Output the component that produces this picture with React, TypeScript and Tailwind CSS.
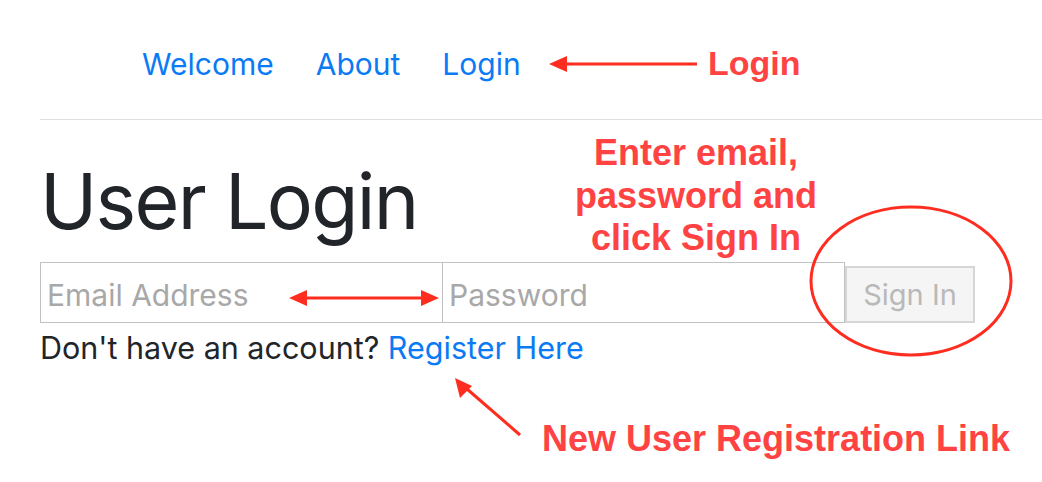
import React from "react";

const blue = "text-[#0a7bf5]";

const Annotations = () => (
  <>
    <svg
      className="pointer-events-none absolute left-0 top-0"
      width={1042}
      height={482}
      viewBox="0 0 1042 482"
    >
      {/* nav arrow */}
      <line x1={697} y1={64} x2={562} y2={64} stroke="#fe2d20" strokeWidth={3} />
      <path d="M549 64 L567 56 L567 72 Z" fill="#fe2d20" />
      {/* double arrow */}
      <line x1={300} y1={298} x2={428} y2={298} stroke="#fe2d20" strokeWidth={3} />
      <path d="M289 298 L307 290 L307 306 Z" fill="#fe2d20" />
      <path d="M439 298 L421 290 L421 306 Z" fill="#fe2d20" />
      {/* diagonal arrow */}
      <line x1={520} y1={435} x2={467} y2={389} stroke="#fe2d20" strokeWidth={3} />
      <path d="M455 378 L460 398 L472 386 Z" fill="#fe2d20" />
      {/* circle around sign in */}
      <ellipse cx={911} cy={281} rx={100} ry={74} fill="none" stroke="#fe2d20" strokeWidth={3} />
    </svg>
    <div className="absolute left-[708px] top-[42px] font-['Liberation_Sans',Arial,sans-serif] text-[34px] font-bold leading-[42px] text-[#ff4242]">
      Login
    </div>
    <div className="absolute left-[546px] top-[132px] w-[300px] text-center font-['Liberation_Sans',Arial,sans-serif] text-[36px] font-bold leading-[42.5px] text-[#ff4242]">
      Enter email,
      <br />
      password and
      <br />
      click Sign In
    </div>
    <div className="absolute left-[542px] top-[418px] whitespace-nowrap font-['Liberation_Sans',Arial,sans-serif] text-[36px] font-bold leading-[42px] text-[#ff4242]">
      New User Registration Link
    </div>
  </>
);

export default function App() {
  return (
    <div className="relative h-[482px] w-[1042px] overflow-hidden bg-white font-['Inter',sans-serif] text-[#212529]">
      <nav className="flex gap-[42px] pl-[142px] pt-[41px] text-[30px] leading-[46px]">
        <a className={blue}>Welcome</a>
        <a className={blue}>About</a>
        <a className={blue}>Login</a>
      </nav>
      <hr className="ml-[40px] mt-[32px] border-t border-[#dedede]" />
      <div className="pl-[40px]">
        <h1 className="mt-[43px] text-[77px] font-normal leading-none tracking-[-1.7px]">User Login</h1>
        <form className="mt-[22px] flex items-end">
          <input
            placeholder="Email Address"
            className="h-[61px] w-[403px] border border-[#c2c2c2] px-[6px] pt-[4px] text-[30px] outline-none placeholder:text-[#a8a8a8]"
          />
          <input
            type="password"
            placeholder="Password"
            className="-ml-px h-[61px] w-[403px] border border-[#c2c2c2] px-[6px] pt-[4px] text-[30px] outline-none placeholder:text-[#a8a8a8]"
          />
          <button
            type="button"
            className="h-[57px] w-[130px] border-2 border-[#d6d6d6] bg-[#f5f5f5] text-[29px] text-[#b9b9b9]"
          >
            Sign In
          </button>
        </form>
        <p className="mt-[3px] text-[30.5px] leading-[43px]">
          Don't have an account? <a className={blue}>Register Here</a>
        </p>
      </div>
      <Annotations />
    </div>
  );
}
